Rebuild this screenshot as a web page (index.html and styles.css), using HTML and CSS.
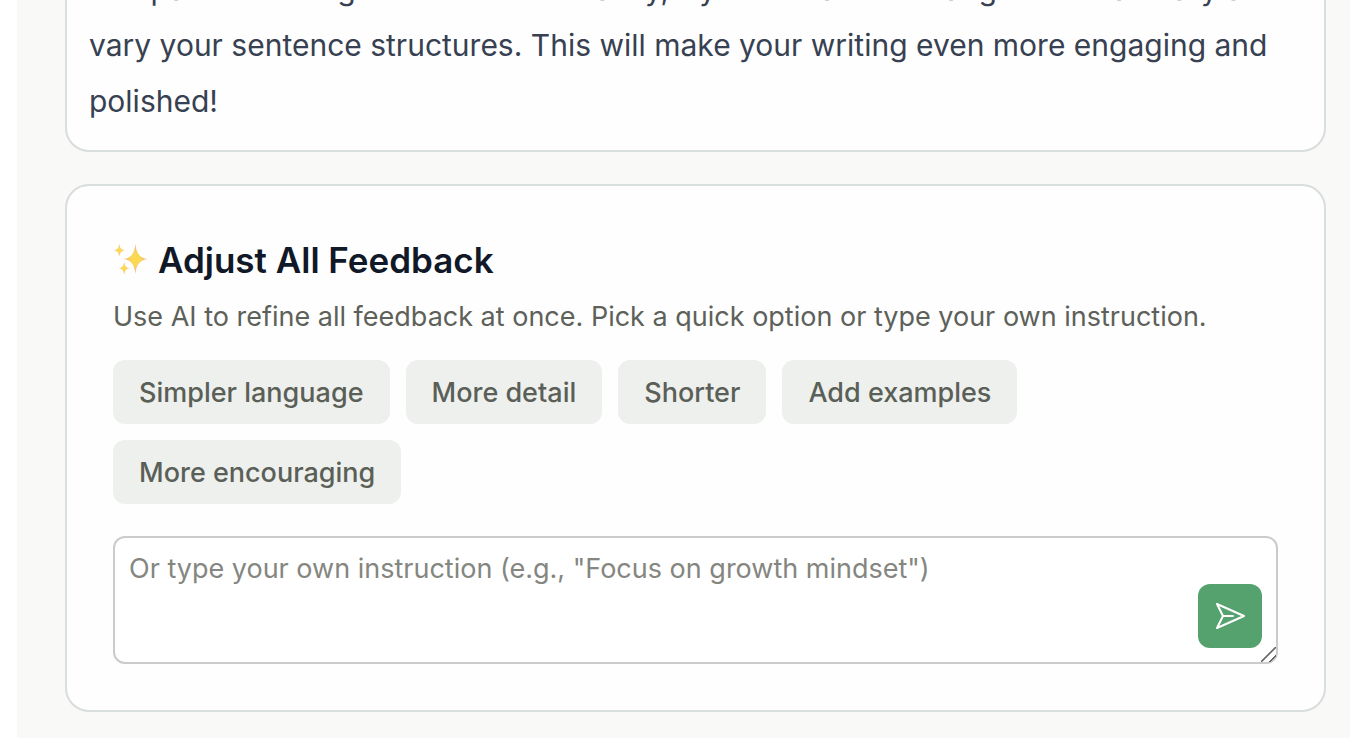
FILE: index.html
```
<!DOCTYPE html>
<html lang="en">
<head>
<meta charset="utf-8">
<title>Feedback</title>
<link rel="stylesheet" href="styles.css">
</head>
<body>
<main class="page">
	<section class="card feedback">
		<p>comparison to dogs from the text. Lastly, try to use a wider range of vocabulary and vary your sentence structures. This will make your writing even more engaging and polished!</p>
	</section>

	<section class="card adjust">
		<h2 class="title">
			<svg class="sparkles" viewBox="0 0 36 36" aria-hidden="true">
				<defs>
					<radialGradient id="gold">
						<stop offset="0" stop-color="#fbdc45"/>
						<stop offset="0.4" stop-color="#fbd65c"/>
						<stop offset="1" stop-color="#f0a878"/>
					</radialGradient>
				</defs>
				<path fill="url(#gold)" d="M23 1 Q24 15 35.500 16.500 Q24 18 23 32 Q22 18 11 16.500 Q22 15 23 1Z"/>
				<path fill="url(#gold)" d="M6.500 1 Q7.200 7 12 7.500 Q7.200 8 6.500 14 Q5.800 8 1 7.500 Q5.800 7 6.500 1Z"/>
				<path fill="url(#gold)" d="M11.500 19.500 Q12.200 25.500 17 26 Q12.200 26.500 11.500 32.500 Q10.800 26.500 6 26 Q10.800 25.500 11.500 19.500Z"/>
			</svg>
			Adjust All Feedback
		</h2>
		<p class="hint">Use AI to refine all feedback at once. Pick a quick option or type your own instruction.</p>
		<div class="options">
			<button type="button">Simpler language</button>
			<button type="button">More detail</button>
			<button type="button">Shorter</button>
			<button type="button">Add examples</button>
			<button type="button">More encouraging</button>
		</div>
		<form class="instruction">
			<textarea aria-label="Your own instruction" placeholder="Or type your own instruction (e.g., &quot;Focus on growth mindset&quot;)"></textarea>
			<button type="button" class="send" aria-label="Send">
				<svg viewBox="0 0 32 32" aria-hidden="true"><path d="M9 16 L3 4 L30 16 L3 28 Z M9 16 H19"/></svg>
			</button>
		</form>
	</section>
</main>
</body>
</html>
```
FILE: styles.css
```
* {
  box-sizing: border-box;
}
body {
  margin: 0;
  background-color: #ffffff;
  font-family: Inter, "Liberation Sans", sans-serif;
}
h2, p {
  margin: 0;
}

.page {
  display: flex;
  flex-direction: column;
  justify-content: flex-end;
  gap: 32px;
  height: 100vh;
  margin-left: 17px;
  padding: 0 24px 26px 48px;
  overflow: hidden;
  background-color: #f9f9f7;
}
.card {
  flex-shrink: 0;
  border: 2px solid #d8dedb;
  border-radius: 24px;
  background-color: #fefefe;
}

.feedback {
  padding: 22px 22px 21px;
  color: #374151;
  font-size: 30px;
  line-height: 56px;
}

.adjust {
  padding: 46px;
}
.title {
  display: flex;
  align-items: center;
  gap: 10px;
  color: #111827;
  font-size: 35px;
  font-weight: 600;
  line-height: 56px;
}
.sparkles {
  width: 35px;
  height: 35px;
}
.hint {
  color: #5d6159;
  font-size: 27px;
  line-height: 58px;
}

.options {
  display: flex;
  flex-wrap: wrap;
  gap: 16px;
  max-width: 1000px;
  margin-top: 14px;
}
.options button {
  height: 64px;
  padding: 0 26px;
  border: 0;
  border-radius: 12px;
  background-color: #eef0ed;
  color: #5a5f57;
  font: 500 27px Inter, "Liberation Sans", sans-serif;
}

.instruction {
  position: relative;
  margin-top: 32px;
}
.instruction textarea {
  display: block;
  width: 100%;
  height: 128px;
  padding: 10px 80px 10px 14px;
  border: 2px solid #cbcbcb;
  border-radius: 12px;
  background-color: #ffffff;
  color: #111827;
  font: 27px/42px Inter, "Liberation Sans", sans-serif;
  resize: vertical;
}
.instruction textarea::placeholder {
  color: #84867f;
}
.instruction textarea::-webkit-resizer {
  background: linear-gradient(135deg, transparent 46%, #666666 47%, #666666 53%, transparent 54%, transparent 74%, #666666 75%, #666666 81%, transparent 82%);
}
.send {
  position: absolute;
  right: 16px;
  bottom: 16px;
  display: flex;
  align-items: center;
  justify-content: center;
  width: 64px;
  height: 64px;
  padding: 0;
  border: 0;
  border-radius: 12px;
  background-color: #56a26f;
}
.send svg {
  width: 32px;
  height: 32px;
  fill: none;
  stroke: #ffffff;
  stroke-width: 2;
  stroke-linejoin: round;
  stroke-linecap: round;
}
```
